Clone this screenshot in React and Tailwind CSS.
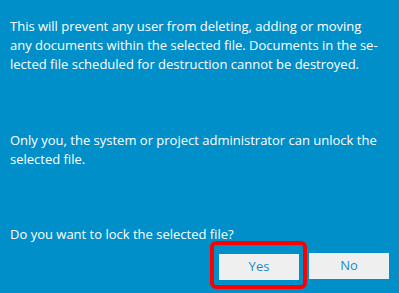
export default function App() {
  return (
    <div className="w-[399px] h-[293px] bg-[#008fc9] text-white overflow-hidden" style={{ fontFamily: '"Open Sans", "Noto Sans", sans-serif' }}>
      <div className="pl-[10px] pt-[17px] text-[13px] leading-[19px] whitespace-nowrap">
        <p>This will prevent any user from deleting, adding or moving</p>
        <p>any documents within the selected file. Documents in the se-</p>
        <p>lected file scheduled for destruction cannot be destroyed.</p>
        <p className="mt-[57px]">Only you, the system or project administrator can unlock the</p>
        <p>selected file.</p>
        <p className="mt-[56px]">Do you want to lock the selected file?</p>
      </div>
      <div className="flex justify-end gap-[10px] pr-[10px] mt-[9px]">
        <div className="relative">
          <button className="w-[80px] h-[26px] bg-[#efefef] text-[#1a8bc9] text-[13px]">Yes</button>
          <div className="absolute -left-[9px] -top-[12px] -right-[8px] -bottom-[9px] border-[4px] border-[#ff0000] rounded-[6px]" />
        </div>
        <button className="w-[80px] h-[26px] bg-[#efefef] text-[#1a8bc9] text-[13px]">No</button>
      </div>
    </div>
  )
}
